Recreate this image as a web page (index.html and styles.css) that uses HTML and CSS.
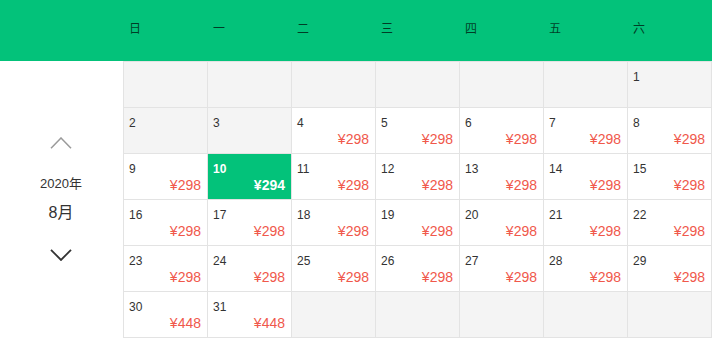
FILE: index.html
```html
<!DOCTYPE html>
<html lang="zh">
<head>
<meta charset="utf-8">
<title>日历</title>
<link rel="stylesheet" href="styles.css">
</head>
<body>
<div class="page">
  <div class="head">
    <div class="head-spacer"></div>
    <div class="weekdays">
      <div class="wd">日</div><div class="wd">一</div><div class="wd">二</div><div class="wd">三</div><div class="wd">四</div><div class="wd">五</div><div class="wd">六</div>
    </div>
  </div>
  <div class="main">
    <div class="side">
      <svg class="chev up" width="22" height="12" viewBox="0 0 22 12"><polyline points="1,11.2 11,1 21,11.2" fill="none" stroke="#9a9a9a" stroke-width="1.5"/></svg>
      <div class="year">2020年</div>
      <div class="month">8月</div>
      <svg class="chev down" width="22" height="12" viewBox="0 0 22 12"><polyline points="1,0.8 11,11 21,0.8" fill="none" stroke="#333" stroke-width="1.8"/></svg>
    </div>
    <div class="grid">
      <div class="cell off"></div><div class="cell off"></div><div class="cell off"></div><div class="cell off"></div><div class="cell off"></div><div class="cell off"></div>
      <div class="cell off"><div class="num">1</div></div>

      <div class="cell off"><div class="num">2</div></div>
      <div class="cell off"><div class="num">3</div></div>
      <div class="cell"><div class="num">4</div><div class="price">¥298</div></div>
      <div class="cell"><div class="num">5</div><div class="price">¥298</div></div>
      <div class="cell"><div class="num">6</div><div class="price">¥298</div></div>
      <div class="cell"><div class="num">7</div><div class="price">¥298</div></div>
      <div class="cell"><div class="num">8</div><div class="price">¥298</div></div>

      <div class="cell"><div class="num">9</div><div class="price">¥298</div></div>
      <div class="cell today"><div class="num">10</div><div class="price">¥294</div></div>
      <div class="cell"><div class="num">11</div><div class="price">¥298</div></div>
      <div class="cell"><div class="num">12</div><div class="price">¥298</div></div>
      <div class="cell"><div class="num">13</div><div class="price">¥298</div></div>
      <div class="cell"><div class="num">14</div><div class="price">¥298</div></div>
      <div class="cell"><div class="num">15</div><div class="price">¥298</div></div>

      <div class="cell"><div class="num">16</div><div class="price">¥298</div></div>
      <div class="cell"><div class="num">17</div><div class="price">¥298</div></div>
      <div class="cell"><div class="num">18</div><div class="price">¥298</div></div>
      <div class="cell"><div class="num">19</div><div class="price">¥298</div></div>
      <div class="cell"><div class="num">20</div><div class="price">¥298</div></div>
      <div class="cell"><div class="num">21</div><div class="price">¥298</div></div>
      <div class="cell"><div class="num">22</div><div class="price">¥298</div></div>

      <div class="cell"><div class="num">23</div><div class="price">¥298</div></div>
      <div class="cell"><div class="num">24</div><div class="price">¥298</div></div>
      <div class="cell"><div class="num">25</div><div class="price">¥298</div></div>
      <div class="cell"><div class="num">26</div><div class="price">¥298</div></div>
      <div class="cell"><div class="num">27</div><div class="price">¥298</div></div>
      <div class="cell"><div class="num">28</div><div class="price">¥298</div></div>
      <div class="cell"><div class="num">29</div><div class="price">¥298</div></div>

      <div class="cell"><div class="num">30</div><div class="price">¥448</div></div>
      <div class="cell"><div class="num">31</div><div class="price">¥448</div></div>
      <div class="cell off"></div><div class="cell off"></div><div class="cell off"></div><div class="cell off"></div><div class="cell off"></div>
    </div>
  </div>
</div>
</body>
</html>
```

FILE: styles.css
```css
* { box-sizing: border-box; }
html, body { margin: 0; padding: 0; background: #fff; }
body {
  font-family: "Liberation Sans", "Noto Sans CJK SC", Arial, sans-serif;
  color: #333;
  width: 712px;
  overflow: hidden;
}
.page { width: 712px; }
.head {
  height: 61px;
  background: #03c27a;
  display: flex;
}
.head-spacer { width: 124px; flex: none; }
.weekdays {
  display: grid;
  grid-template-columns: repeat(7, 84px);
}
.wd {
  padding: 20px 0 0 5px;
  font-size: 12px;
  line-height: 16px;
  color: rgba(0, 0, 0, 0.7);
  font-family: "Noto Sans CJK SC", sans-serif;
}
.main { display: flex; }
.side {
  width: 123px;
  flex: none;
  display: flex;
  flex-direction: column;
  align-items: center;
  padding-top: 76px;
  padding-right: 1px;
}
.chev { display: block; }
.year {
  margin-top: 26px;
  font-size: 13px;
  line-height: 17px;
  color: #333;
}
.month {
  margin-top: 11px;
  font-size: 16px;
  line-height: 20px;
  color: #333;
}
.chev.down { margin-top: 26px; }
.grid {
  display: grid;
  grid-template-columns: repeat(7, 84px);
  grid-auto-rows: 46px;
  border-left: 1px solid #e3e3e3;
  border-top: 1px solid #e3e3e3;
}
.cell {
  border-right: 1px solid #e3e3e3;
  border-bottom: 1px solid #e3e3e3;
  padding: 8px 6px 0 5px;
  background: #fff;
}
.cell.off { background: #f4f4f4; }
.num {
  font-size: 12px;
  line-height: 14px;
  color: #333;
}
.price {
  margin-top: 1px;
  text-align: right;
  font-size: 14px;
  line-height: 16px;
  color: #f0584b;
}
.cell.today { background: #03c27a; }
.cell.today .num,
.cell.today .price { color: #fff; font-weight: bold; }
```
